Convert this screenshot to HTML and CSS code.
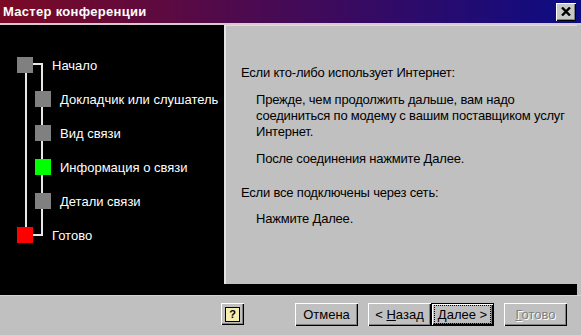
FILE: index.html
```html
<!DOCTYPE html>
<html lang="ru">
<head>
<meta charset="UTF-8" />
<title>Мастер конференции</title>
<link rel="stylesheet" href="styles.css">
</head>
<body>
  <div class="window">
    <div class="titlebar">
      <span class="title">Мастер конференции</span>
      <button class="close-btn">
        <svg width="10" height="9" viewBox="0 0 10 9">
          <path d="M1 0.5 L9 8.5 M9 0.5 L1 8.5" stroke="#000" stroke-width="2.4" />
        </svg>
      </button>
    </div>

    <div class="main">
      <div class="steps">
        <svg class="lines" width="60" height="240" viewBox="0 0 60 240">
          <rect x="25" y="46" width="2" height="160" fill="#e8e8e8" />
          <rect x="32" y="38" width="11" height="2" fill="#e8e8e8" />
          <rect x="41" y="38" width="2" height="173" fill="#e8e8e8" />
          <rect x="32" y="209" width="11" height="2" fill="#e8e8e8" />
        </svg>
        <div class="step top"><span class="sq"></span>Начало</div>
        <div class="step sub"><span class="sq"></span>Докладчик или слушатель</div>
        <div class="step sub"><span class="sq"></span>Вид связи</div>
        <div class="step sub"><span class="sq current"></span>Информация о связи</div>
        <div class="step sub"><span class="sq"></span>Детали связи</div>
        <div class="step top"><span class="sq finish"></span>Готово</div>
      </div>

      <div class="content">
        <p>Если кто-либо использует Интернет:</p>
        <p class="indent">Прежде, чем продолжить дальше, вам надо<br>соединиться по модему с вашим поставщиком услуг<br>Интернет.</p>
        <p class="indent">После соединения нажмите Далее.</p>
        <p class="gap">Если все подключены через сеть:</p>
        <p class="indent">Нажмите Далее.</p>
      </div>
    </div>

    <div class="footer">
      <button class="btn help"><span class="help-icon">?</span></button>
      <button class="btn cancel">Отмена</button>
      <button class="btn"><span>&lt; <u>Н</u>азад</span></button>
      <button class="btn default"><span class="focus"><u>Д</u>алее &gt;</span></button>
      <button class="btn disabled"><span><u>Г</u>отово</span></button>
    </div>
  </div>
</body>
</html>
```

FILE: styles.css
```css
body {
  margin: 0;
  background: #c0c0c0;
  font-family: 'Liberation Sans', Arial, sans-serif;
  font-size: 13px;
}
.window {
  width: 581px;
  height: 335px;
  background: #c0c0c0;
  overflow: hidden;
}
.titlebar {
  height: 23px;
  border-bottom: 2px solid #d8c8d0;
  background: linear-gradient(to right, #7c0a24, #4a0a52 45%, #0c0c84);
  display: flex;
  align-items: center;
  justify-content: space-between;
  padding: 0 5px 0 3px;
}
.title {
  color: #fff;
  font-weight: bold;
  font-size: 13px;
  letter-spacing: 0.3px;
}
.close-btn {
  width: 20px;
  height: 18px;
  padding: 0;
  border: none;
  background: #c8c8c8;
  box-shadow: inset 1px 1px #fff, inset -1px -1px #000, inset -2px -2px #808080;
  display: flex;
  align-items: center;
  justify-content: center;
}
.main {
  display: flex;
  height: 270px;
  background: #000;
  margin-right: 4px;
}
.steps {
  position: relative;
  width: 224px;
  padding-top: 23px;
  color: #fff;
}
.lines {
  position: absolute;
  left: 0;
  top: 0;
}
.step {
  position: relative;
  height: 34px;
  display: flex;
  align-items: center;
}
.step.top {
  padding-left: 17px;
  gap: 19px;
}
.step.sub {
  padding-left: 35px;
  gap: 9px;
}
.sq {
  width: 16px;
  height: 16px;
  background: #808080;
}
.sq.current {
  background: #00ff00;
}
.sq.finish {
  background: #ff0000;
}
.content {
  flex: 1;
  margin-bottom: 11px;
  background: #c0c0c0;
  border-top: 1px solid #dcdcdc;
  border-left: 2px solid #e4e4e4;
  padding: 39px 4px 0 15px;
  line-height: 16px;
  color: #000;
  letter-spacing: -0.2px;
  white-space: nowrap;
}
.content p {
  margin: 0 0 11px;
}
.content p.indent {
  padding-left: 15px;
}
.content p:nth-child(3) {
  margin-bottom: 18px;
}
.content p.gap {
  margin-bottom: 10px;
}
.footer {
  border-top: 1px solid #d4d4d4;
  display: flex;
  justify-content: flex-end;
  padding: 7px 14px 0 0;
}
.btn {
  height: 23px;
  width: 63px;
  padding: 0;
  margin-left: 10px;
  border: none;
  background: #c0c0c0;
  font-family: 'Liberation Sans', Arial, sans-serif;
  font-size: 13px;
  color: #000;
  box-shadow: inset 1px 1px #fff, inset -1px -1px #000, inset -2px -2px #808080;
  display: flex;
  align-items: center;
  justify-content: center;
}
.btn.help {
  width: 23px;
  height: 22px;
  margin-right: 41px;
}
.help-icon {
  width: 13px;
  height: 13px;
  background: #f4eeb0;
  border: 1px solid #000;
  font-weight: bold;
  font-size: 11px;
  line-height: 13px;
  text-align: center;
}
.btn.default {
  margin-left: 0;
  box-shadow: inset 0 0 0 1px #000, inset 2px 2px #fff, inset -2px -2px #000, inset -3px -3px #808080;
}
.focus {
  border: 1px dotted #000;
  padding: 1px 3px;
}
.btn.disabled {
  color: #808080;
  text-shadow: 1px 1px #fff;
}
```
